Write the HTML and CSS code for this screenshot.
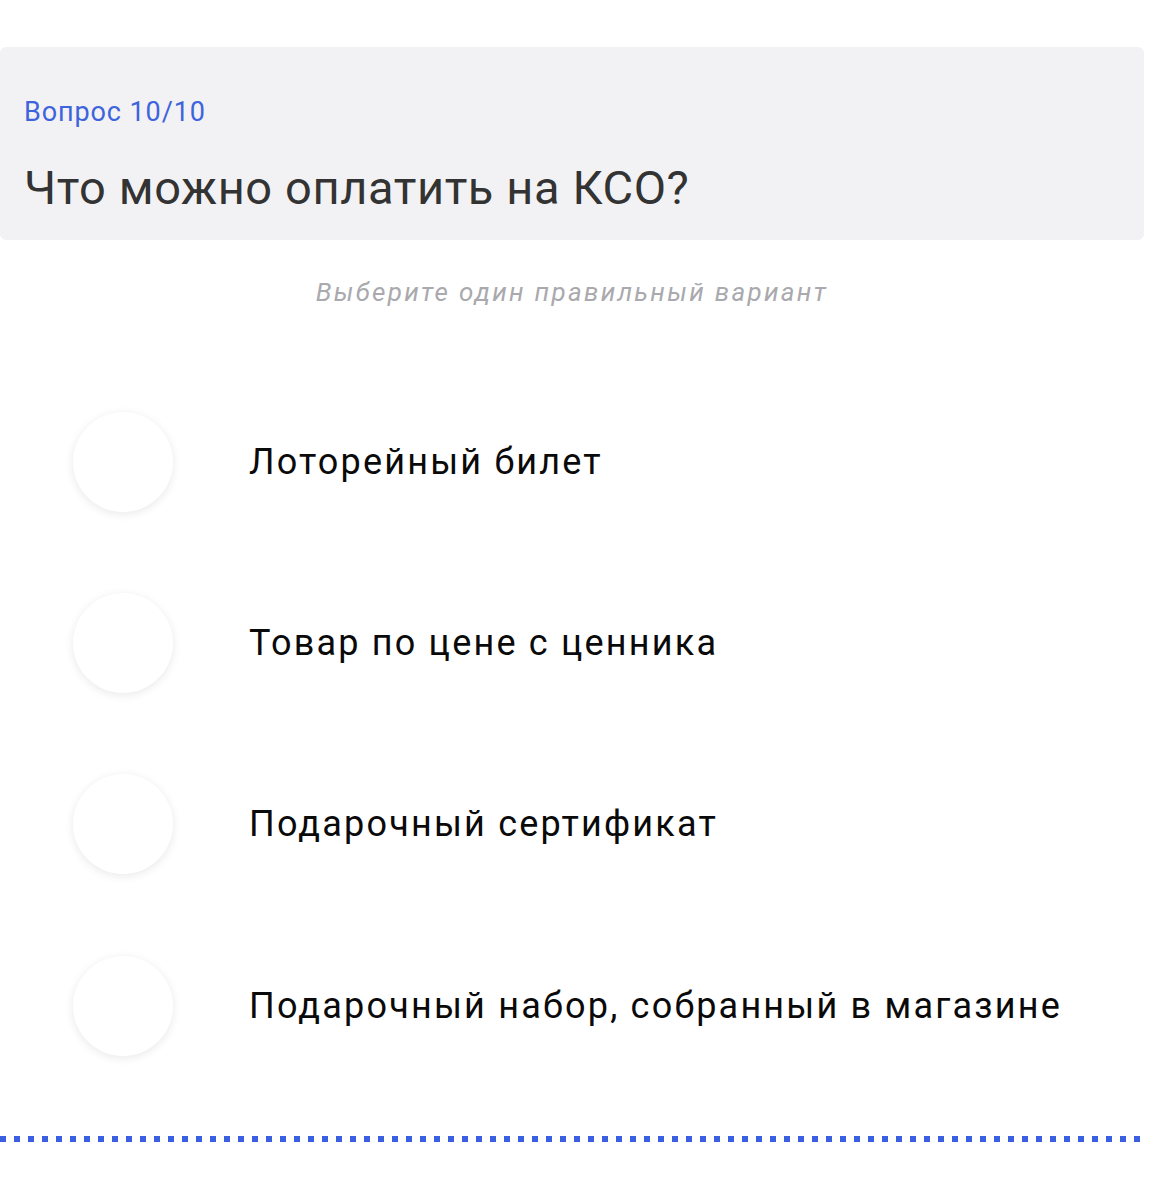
FILE: index.html
```html
<!DOCTYPE html>
<html lang="ru">
<head>
<meta charset="utf-8">
<link rel="stylesheet" href="styles.css">
</head>
<body>
<div class="page">
  <div class="card">
    <div class="counter">Вопрос 10/10</div>
    <div class="question">Что можно оплатить на КСО?</div>
  </div>
  <div class="hint">Выберите один правильный вариант</div>
  <ul class="options">
    <li class="option"><span class="radio"></span><span class="label">Лоторейный билет</span></li>
    <li class="option"><span class="radio"></span><span class="label">Товар по цене с ценника</span></li>
    <li class="option"><span class="radio"></span><span class="label">Подарочный сертификат</span></li>
    <li class="option"><span class="radio"></span><span class="label">Подарочный набор, собранный в магазине</span></li>
  </ul>
  <div class="divider"></div>
</div>
</body>
</html>
```
FILE: styles.css
```css
html, body {
  margin: 0;
  padding: 0;
  background: #ffffff;
}
body {
  font-family: Roboto, "Liberation Sans", sans-serif;
}
.page {
  width: 1144px;
  padding-top: 47px;
}
.card {
  box-sizing: border-box;
  height: 193px;
  background: #f2f2f4;
  border-radius: 6px;
  padding: 49px 24px 0 24px;
}
.counter {
  color: #3d63dd;
  font-size: 27px;
  line-height: 32px;
  letter-spacing: 0.9px;
}
.question {
  color: #333333;
  font-size: 47px;
  line-height: 56px;
  margin-top: 32px;
  letter-spacing: 0.6px;
}
.hint {
  text-align: center;
  color: #a9a9ae;
  font-style: italic;
  font-size: 26px;
  line-height: 32px;
  margin-top: 36px;
  letter-spacing: 2.3px;
}
.options {
  list-style: none;
  margin: 0;
  padding: 0;
  margin-top: 63px;
}
.option {
  display: flex;
  align-items: center;
  height: 181.3px;
  padding-left: 73px;
}
.radio {
  width: 100px;
  height: 100px;
  border-radius: 50%;
  background: #ffffff;
  box-shadow: 0 2px 10px rgba(0, 0, 0, 0.09);
  flex: none;
}
.label {
  margin-left: 76px;
  font-size: 36px;
  letter-spacing: 2.2px;
  color: #0a0a0a;
}
.divider {
  margin-top: 40px;
  height: 6px;
  background: repeating-linear-gradient(to right, #3a5fe0 0, #3a5fe0 6px, transparent 6px, transparent 14px);
}
```
